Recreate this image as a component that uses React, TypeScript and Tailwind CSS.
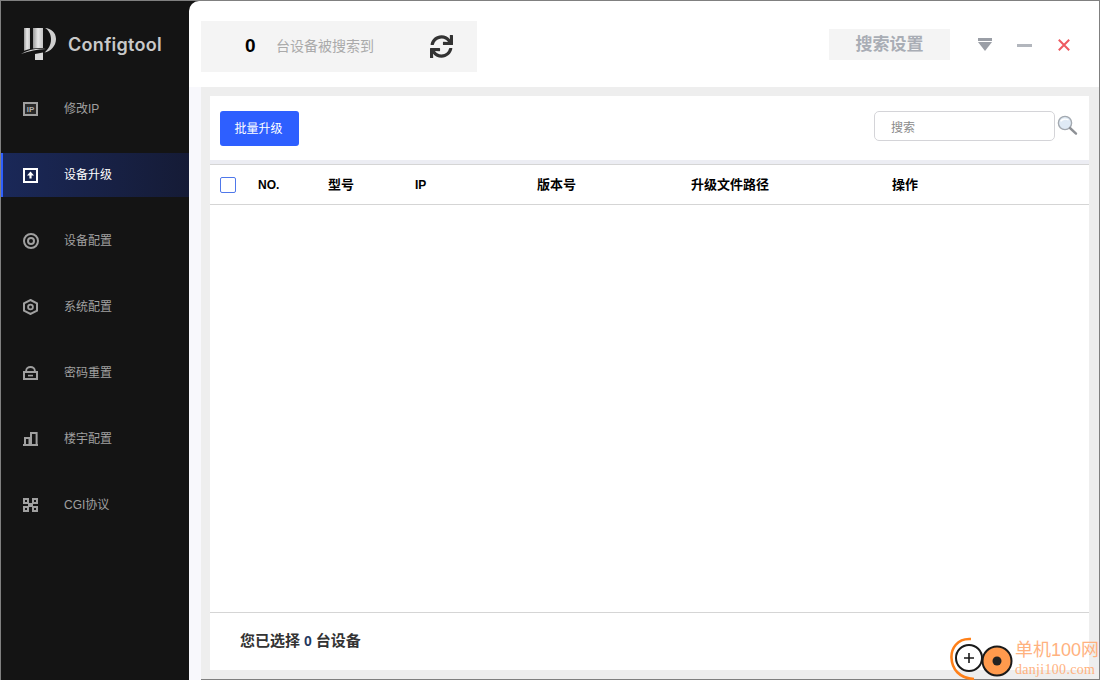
import React from 'react';
import { FaSync } from 'react-icons/fa';

const IpIcon = () => (
  <svg width="15" height="14" viewBox="0 0 15 14">
    <rect x="1" y="1" width="13" height="12" fill="#2a2a2a" stroke="#a0a0a0" strokeWidth="2" />
    <text x="7.5" y="10" textAnchor="middle" fontSize="8" fontWeight="700" fill="#b0b0b0" fontFamily="Liberation Sans">IP</text>
  </svg>
);

const UpgradeIcon = () => (
  <svg width="15" height="15" viewBox="0 0 15 15">
    <rect x="1" y="1" width="13" height="13" fill="#16234d" stroke="#fff" strokeWidth="2" />
    <path d="M7.5 3.6 L11 7.4 H8.6 V10.6 H6.4 V7.4 H4 Z" fill="#fff" />
  </svg>
);

const TargetIcon = () => (
  <svg width="16" height="16" viewBox="0 0 16 16">
    <circle cx="8" cy="8" r="7" fill="none" stroke="#a0a0a0" strokeWidth="2" />
    <circle cx="8" cy="8" r="3" fill="none" stroke="#a0a0a0" strokeWidth="2" />
  </svg>
);

const HexIcon = () => (
  <svg width="15" height="16" viewBox="0 0 15 16">
    <path d="M7.5 1 L14 4.4 V11.6 L7.5 15 L1 11.6 V4.4 Z" fill="none" stroke="#a0a0a0" strokeWidth="2" />
    <circle cx="7.5" cy="8" r="2.4" fill="none" stroke="#a0a0a0" strokeWidth="1.8" />
  </svg>
);

const LockIcon = () => (
  <svg width="15" height="14" viewBox="0 0 15 14">
    <path d="M3.2 6 V4.6 C3.2 2.4 5 1 7.5 1 C10 1 11.8 2.4 11.8 4.6 V6" fill="none" stroke="#a0a0a0" strokeWidth="1.8" />
    <rect x="1" y="6" width="13" height="7" fill="none" stroke="#a0a0a0" strokeWidth="2" />
    <rect x="5" y="8.8" width="5" height="1.6" fill="#a0a0a0" />
  </svg>
);

const BuildingIcon = () => (
  <svg width="15" height="14" viewBox="0 0 15 14">
    <path d="M0 13 H15" stroke="#a0a0a0" strokeWidth="2" />
    <path d="M2 13 V6 H6.5 V13" fill="none" stroke="#a0a0a0" strokeWidth="2" />
    <path d="M8 13 V1 H13.6 V13" fill="none" stroke="#a0a0a0" strokeWidth="2" />
  </svg>
);

const GridIcon = () => (
  <svg width="15" height="14" viewBox="0 0 15 14" fill="#a0a0a0">
    <rect x="0" y="0" width="6" height="6" />
    <rect x="9" y="0" width="6" height="6" />
    <rect x="0" y="8" width="6" height="6" />
    <rect x="9" y="8" width="6" height="6" />
    <rect x="5" y="5" width="5" height="4" />
    <rect x="2" y="2" width="2" height="2" fill="#141414" />
    <rect x="11" y="2" width="2" height="2" fill="#141414" />
    <rect x="2" y="10" width="2" height="2" fill="#141414" />
    <rect x="11" y="10" width="2" height="2" fill="#141414" />
  </svg>
);

const Logo = () => (
  <svg width="36" height="34" viewBox="0 0 36 34">
    <defs>
      <linearGradient id="lg" x1="0" y1="0" x2="1" y2="0">
        <stop offset="0" stopColor="#9a9a9a" />
        <stop offset="0.5" stopColor="#e8e8e8" />
        <stop offset="1" stopColor="#c4c4c4" />
      </linearGradient>
    </defs>
    <path d="M4 1 H10 V22 C8 22.4 6 23 4 23.8 Z" fill="url(#lg)" />
    <path d="M13 1 H23 V21 C19 20.8 16 21 13 21.4 Z" fill="url(#lg)" />
    <path d="M15 27 L23 25.4 V33 H15 Z" fill="#d8d8d8" />
    <path d="M25 1 C31 1.5 36 5.5 36 12 C36 19 30.5 24.5 24.5 25.5 C28.5 22 31 18 31 12 C31 7 28.5 3 25 1 Z" fill="#cfcfcf" />
    <path d="M1 27 C8 22.6 17 21 26 22 C17 22.4 9 24 1 27 Z" fill="#d8d8d8" />
  </svg>
);

const SearchGlass = () => (
  <svg width="21" height="21" viewBox="0 0 21 21">
    <circle cx="8" cy="8" r="6.6" fill="#dfeaf5" stroke="#a3a9b0" strokeWidth="1.4" />
    <path d="M3.6 6.4 C5 4 8.5 3.4 11.6 5" fill="none" stroke="#fff" strokeWidth="1.4" />
    <path d="M13 13 L19 18.6" stroke="#8d9095" strokeWidth="2.4" strokeLinecap="round" />
  </svg>
);

const menu = [
  { label: '修改IP', icon: <IpIcon /> },
  { label: '设备升级', icon: <UpgradeIcon />, active: true },
  { label: '设备配置', icon: <TargetIcon /> },
  { label: '系统配置', icon: <HexIcon /> },
  { label: '密码重置', icon: <LockIcon /> },
  { label: '楼宇配置', icon: <BuildingIcon /> },
  { label: 'CGI协议', icon: <GridIcon /> },
];

const columns = [
  { label: 'NO.', width: 'w-[70px] text-xs' },
  { label: '型号', width: 'w-[87px]' },
  { label: 'IP', width: 'w-[122px] text-xs' },
  { label: '版本号', width: 'w-[154px]' },
  { label: '升级文件路径', width: 'w-[201px]' },
  { label: '操作', width: 'w-[80px]' },
];

const App = () => {
  return (
    <div className="relative flex h-[680px] w-[1100px] overflow-hidden border-x border-t border-[#808080] bg-[#141414] font-['Liberation_Sans','Noto_Sans_CJK_SC',sans-serif]">
      {/* Sidebar */}
      <aside className="flex w-[188px] shrink-0 flex-col">
        <div className="flex h-[86px] items-center pl-[19px]">
          <Logo />
          <span className="ml-[12px] font-['Inter',sans-serif] text-[18px] font-semibold tracking-[0.3px] text-[#c9c9c9]">Configtool</span>
        </div>
        <nav className="flex flex-col gap-[22px]">
          {menu.map(item => (
            <div
              key={item.label}
              className={`flex h-[44px] items-center border-l-2 pl-[20px] text-xs ${item.active ? 'border-[#2e5fff] bg-gradient-to-r from-[#1a2858] to-[#151b36] text-white' : 'border-transparent text-[#a0a0a0]'}`}
            >
              <span className="flex w-[41px] shrink-0">{item.icon}</span>
              <span>{item.label}</span>
            </div>
          ))}
        </nav>
      </aside>

      {/* Main */}
      <main className="flex min-w-0 flex-1 flex-col overflow-hidden rounded-tl-[10px] bg-white">
        <header className="flex h-[86px] shrink-0 items-start pl-[12px] pt-[20px]">
          <div className="flex h-[51px] w-[276px] items-center bg-[#f4f4f4]">
            <span className="ml-[44px] w-[31px] text-[19px] font-bold text-black">0</span>
            <span className="text-[14px] text-[#aaaaaa]">台设备被搜索到</span>
            <FaSync className="ml-[56px] text-[#333333]" size={23} />
          </div>
          <div className="ml-auto mt-[8px] flex h-[31px] w-[121px] items-center justify-center bg-[#f4f4f4] text-[17px] font-bold text-[#a9adb5]">搜索设置</div>
          <div className="ml-[28px] mt-[17px] flex flex-col items-center">
            <div className="h-[3px] w-[14px] bg-[#9a9ea6]" />
            <div className="mt-[1px] h-0 w-0 border-x-[7px] border-t-[9px] border-x-transparent border-t-[#9a9ea6]" />
          </div>
          <div className="ml-[25px] mt-[23px] h-[3px] w-[15px] bg-[#b2b6bd]" />
          <svg className="ml-[26px] mr-[29px] mt-[18px]" width="12" height="12" viewBox="0 0 12 12">
            <path d="M0.8 0.8 L11.2 11.2 M11.2 0.8 L0.8 11.2" stroke="#ee5a60" strokeWidth="2" />
          </svg>
        </header>

        <div className="flex min-h-0 flex-1">
          <div className="w-[12px] shrink-0 bg-[#f8f8fc]" />
          <div className="flex min-w-0 flex-1 flex-col border-b border-[#808080] bg-[#eeeeee] pb-[9px] pl-[9px] pr-[10px] pt-[9px]">
            <div className="flex min-h-0 flex-1 flex-col bg-white">
              {/* Toolbar */}
              <div className="flex h-[64px] shrink-0 items-start pl-[10px] pt-[15px]">
                <button className="h-[35px] w-[79px] rounded-[3px] bg-[#2e5fff] pr-[2px] pt-[1px] text-xs text-white">批量升级</button>
                <div className="ml-auto flex h-[30px] w-[181px] items-center rounded-[5px] border border-[#d4d4d8] pl-[16px] pt-[3px] text-xs text-[#8a8a8a]">搜索</div>
                <div className="ml-[2px] mr-[11px] mt-[4px]"><SearchGlass /></div>
              </div>
              <div className="h-[4px] shrink-0 bg-[#ecedf3]" />

              {/* Table header */}
              <div className="flex h-[41px] shrink-0 items-center border-y border-[#d5d5d5] pl-[10px] pt-[1px] text-[13px] font-bold text-black">
                <span className="mr-[22px] h-[16px] w-[16px] rounded-[2px] border border-[#4f78ea]" />
                {columns.map(col => (
                  <span key={col.label} className={col.width}>{col.label}</span>
                ))}
              </div>

              <div className="min-h-0 flex-1" />

              {/* Footer */}
              <div className="flex h-[58px] shrink-0 items-center border-t border-[#d5d5d5] pl-[30px] text-[15px] font-bold text-[#333333]">
                您已选择<span className="mx-[4px] text-[14px] text-[#1f3a5f]">0</span>台设备
              </div>
            </div>
          </div>
        </div>
      </main>

      {/* Watermark */}
      <div className="absolute bottom-0 right-0 flex h-[44px] w-[150px] items-end">
        <svg className="shrink-0" width="66" height="44" viewBox="0 0 66 44">
          <path d="M22 3 C8 2 2 13 2.5 22 C3 33 10 42 25 43" fill="none" stroke="#ff8019" strokeWidth="2.6" />
          <circle cx="20" cy="22" r="13" fill="#fff" stroke="#1a1a1a" strokeWidth="2" />
          <path d="M15 22 H25 M20 17 V27" stroke="#1a1a1a" strokeWidth="1.6" />
          <circle cx="48" cy="25" r="14.5" fill="#ff9a4d" stroke="#1a1a1a" strokeWidth="2" />
          <circle cx="48" cy="25" r="4.5" fill="#222" />
        </svg>
        <div className="mb-[3px] flex flex-col whitespace-nowrap leading-none text-[#ffb27f]">
          <span className="text-[18px] leading-[24px]">单机100网</span>
          <span className="font-['Liberation_Serif',serif] text-[14px] leading-[15px] tracking-[0.3px]">danji100.com</span>
        </div>
      </div>
    </div>
  );
};

export default App;
